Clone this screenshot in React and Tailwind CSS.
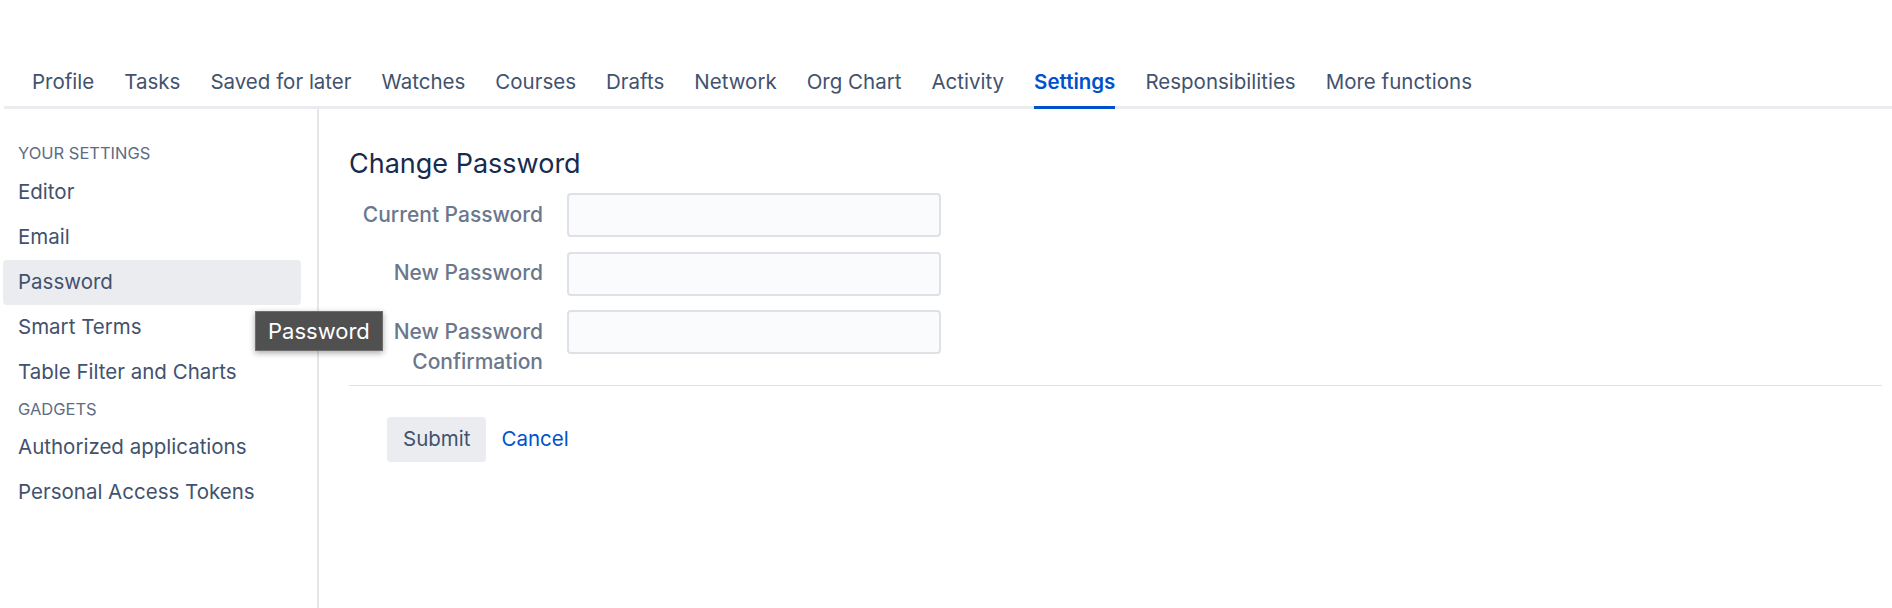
import React from 'react';

const tabs = ['Profile', 'Tasks', 'Saved for later', 'Watches', 'Courses', 'Drafts', 'Network', 'Org Chart', 'Activity', 'Settings', 'Responsibilities', 'More functions'];

const settingsLinks = ['Editor', 'Email', 'Password', 'Smart Terms', 'Table Filter and Charts'];
const gadgetLinks = ['Authorized applications', 'Personal Access Tokens'];

const SideLink = ({ label, active }) => (
  <div className={`h-[45px] pl-[15px] flex items-center rounded-[4px] ${active ? 'bg-[#ebecf0]' : ''}`}>{label}</div>
);

const Field = ({ label, lines }) => (
  <div className="flex items-start gap-[24px]">
    <div className="w-[194px] pt-[6.5px] text-right font-medium text-[21px] text-[#6b778c] leading-[30px]">
      {lines ? lines.map(l => <div key={l}>{l}</div>) : label}
    </div>
    <input type="password" className="w-[374px] h-[44px] border-2 border-[#dfe1e6] bg-[#fafbfc] rounded-[4px] outline-none" />
  </div>
);

export default function App() {
  return (
    <div className="relative w-[1892px] h-[608px] overflow-hidden bg-white flex flex-col font-['Inter',sans-serif] text-[20.5px] text-[#42526e]">
      <div className="h-[67px] shrink-0" />
      <nav className="ml-[4px] pl-[28px] flex gap-[30px] border-b-[3px] border-[#ebecf0]">
        {tabs.map(t => (
          <div key={t} className={`leading-[30px] pb-[9px] ${t === 'Settings' ? 'text-[#0052cc] font-semibold border-b-[3px] border-[#0052cc] -mb-[3px]' : ''}`}>{t}</div>
        ))}
      </nav>
      <div className="flex flex-1">
        <aside className="w-[319px] shrink-0 border-r-2 border-[#e4e6ea] pl-[3px] pr-[16px] pt-[32px]">
          <div className="h-[24px] pl-[15px] text-[16.5px] leading-[24px] text-[#5e6c84] uppercase mb-[5px]">Your Settings</div>
          {settingsLinks.map(l => <SideLink key={l} label={l} active={l === 'Password'} />)}
          <div className="h-[24px] pl-[15px] text-[16.5px] leading-[24px] text-[#5e6c84] uppercase mt-[2px] mb-[4px]">Gadgets</div>
          {gadgetLinks.map(l => <SideLink key={l} label={l} />)}
        </aside>
        <main className="flex-1 pl-[30px] pr-[10px] pt-[37px]">
          <h2 className="text-[27px] leading-[36px] text-[#172b4d]">Change Password</h2>
          <div className="mt-[11px] flex flex-col gap-[14.5px]">
            <Field label="Current Password" />
            <Field label="New Password" />
            <Field lines={['New Password', 'Confirmation']} />
          </div>
          <div className="mt-[8px] border-t border-[#dfe1e6]" />
          <div className="mt-[31px] ml-[38px] flex items-center gap-[15px]">
            <button className="h-[45px] px-[16px] rounded-[4px] bg-[#ebecf0] text-[#42526e]">Submit</button>
            <a className="text-[#0052cc]">Cancel</a>
          </div>
        </main>
      </div>
      <div className="absolute left-[255px] top-[311px] h-[40px] px-[12px] flex items-center bg-[#505050] border border-[#6e6e6e] text-[22px] text-white shadow-[0_2px_6px_rgba(0,0,0,0.35)]">Password</div>
    </div>
  );
}
